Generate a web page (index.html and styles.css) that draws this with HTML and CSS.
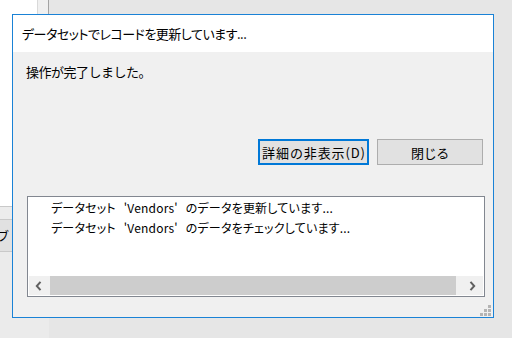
FILE: index.html
```html
<!DOCTYPE html>
<html lang="ja">
<head>
<meta charset="utf-8">
<title>データセットでレコードを更新しています...</title>
<link rel="stylesheet" href="styles.css">
</head>
<body>
<div class="desk">
  <div class="bgwin">
    <div class="bgwin-top">
      <div class="bgwin-pane"></div>
      <div class="bgwin-side"></div>
    </div>
    <div class="bgwin-rule"></div>
    <div class="bgwin-band"></div>
    <div class="bgwin-btn"><span class="bgwin-label">ブ</span></div>
  </div>

  <div class="dialog">
    <div class="titlebar">データセットでレコードを更新しています...</div>
    <div class="content">
      <p class="message">操作が完了しました。</p>
      <div class="buttons">
        <button class="btn btn-default">詳細の非表示(D)</button>
        <button class="btn btn-close">閉じる</button>
      </div>
      <div class="details">
        <div class="lines">
          <div class="line">データセット 'Vendors' のデータを更新しています...</div>
          <div class="line">データセット 'Vendors' のデータをチェックしています...</div>
        </div>
        <div class="hscroll">
          <span class="arrow arrow-left">
            <svg width="7" height="10" viewBox="0 0 7 10"><path d="M5.5 0.8 L1.8 5 L5.5 9.2" fill="none" stroke="#606060" stroke-width="2"/></svg>
          </span>
          <span class="thumb"></span>
          <span class="arrow arrow-right">
            <svg width="7" height="10" viewBox="0 0 7 10"><path d="M1.5 0.8 L5.2 5 L1.5 9.2" fill="none" stroke="#606060" stroke-width="2"/></svg>
          </span>
        </div>
      </div>
      <svg class="grip" width="11" height="11" viewBox="0 0 11 11">
        <rect x="8" y="0" width="3" height="3" fill="#b4b4b4"/>
        <rect x="4" y="4" width="3" height="3" fill="#b4b4b4"/>
        <rect x="8" y="4" width="3" height="3" fill="#b4b4b4"/>
        <rect x="0" y="8" width="3" height="3" fill="#b4b4b4"/>
        <rect x="4" y="8" width="3" height="3" fill="#b4b4b4"/>
        <rect x="8" y="8" width="3" height="3" fill="#b4b4b4"/>
      </svg>
    </div>
  </div>
</div>
</body>
</html>
```

FILE: styles.css
```css
* { box-sizing: border-box; }

html, body {
  margin: 0;
  padding: 0;
}

body {
  width: 512px;
  height: 338px;
  overflow: hidden;
  background: #e6e6e6;
  font-family: "Noto Sans CJK JP", "Noto Sans", sans-serif;
  font-size: 12px;
  color: #000;
}

.desk {
  position: relative;
  width: 512px;
  height: 338px;
}

/* background application window, partly hidden by the dialog */
.bgwin {
  position: absolute;
  left: 0;
  top: 0;
  width: 49px;
  height: 338px;
  display: flex;
  flex-direction: column;
  background: #ebebeb;
}

.bgwin-top {
  height: 206px;
  display: flex;
}

.bgwin-pane {
  width: 38px;
  background: #fff;
  border-right: 1px solid #d9d9d9;
}

.bgwin-side {
  width: 11px;
  background: #f0f0f0;
  border-right: 1px solid #a3a3a3;
}

.bgwin-rule {
  height: 1px;
  background: #c9c9c9;
}

.bgwin-band {
  height: 13px;
  background: #ececec;
  border-bottom: 1px solid #c9c9c9;
}

.bgwin-btn {
  height: 32px;
  background: #e1e1e1;
  border-bottom: 1px solid #c9c9c9;
  display: flex;
  align-items: center;
  overflow: hidden;
}

.bgwin-label {
  margin-left: -3px;
  font-size: 12px;
  line-height: 16px;
}

/* dialog window */
.dialog {
  position: absolute;
  left: 12px;
  top: 14px;
  width: 482px;
  height: 304px;
  border: 1px solid #1a82d6;
  background: #f0f0f0;
  display: flex;
  flex-direction: column;
}

.titlebar {
  height: 37px;
  flex: none;
  background: #fff;
  padding-left: 9px;
  display: flex;
  align-items: center;
  font-size: 13px;
  font-feature-settings: "palt";
  letter-spacing: -0.5px;
  white-space: nowrap;
}

.content {
  flex: 1;
  position: relative;
  display: flex;
  flex-direction: column;
  padding: 10px 8px 0 13px;
}

.message {
  margin: 0;
  line-height: 20px;
  font-size: 13px;
  letter-spacing: -0.5px;
}

.buttons {
  margin-top: 57px;
  margin-right: 2px;
  display: flex;
  justify-content: flex-end;
  gap: 8px;
}

.btn {
  height: 26px;
  padding: 0;
  border: 1px solid #adadad;
  background: #e1e1e1;
  font-family: "Noto Sans CJK JP", "Noto Sans", sans-serif;
  font-size: 13px;
  color: #000;
  line-height: 1;
}

.btn-default {
  width: 111px;
  border: 2px solid #0078d7;
  letter-spacing: 0.9px;
  padding-left: 1px;
}

.btn-close {
  width: 106px;
  letter-spacing: -0.3px;
}

.details {
  margin-top: 31px;
  margin-left: 1px;
  height: 101px;
  border: 1px solid #828790;
  background: #fff;
  padding: 1px;
  display: flex;
  flex-direction: column;
}

.lines {
  flex: 1;
  padding-left: 22px;
  line-height: 20px;
  font-size: 12px;
  font-feature-settings: "palt";
  letter-spacing: 0.2px;
  white-space: nowrap;
  overflow: hidden;
}

.line {
  word-spacing: 5px;
}

.hscroll {
  height: 19px;
  flex: none;
  display: flex;
  background: #f0f0f0;
}

.arrow {
  display: flex;
  align-items: center;
  justify-content: center;
  flex: none;
}

.arrow-left {
  width: 21px;
  padding-right: 2px;
}

.arrow-right {
  width: 27px;
  padding-left: 5px;
}

.thumb {
  flex: 1;
  background: #cdcdcd;
}

.grip {
  position: absolute;
  right: 2px;
  bottom: 1px;
}
```
